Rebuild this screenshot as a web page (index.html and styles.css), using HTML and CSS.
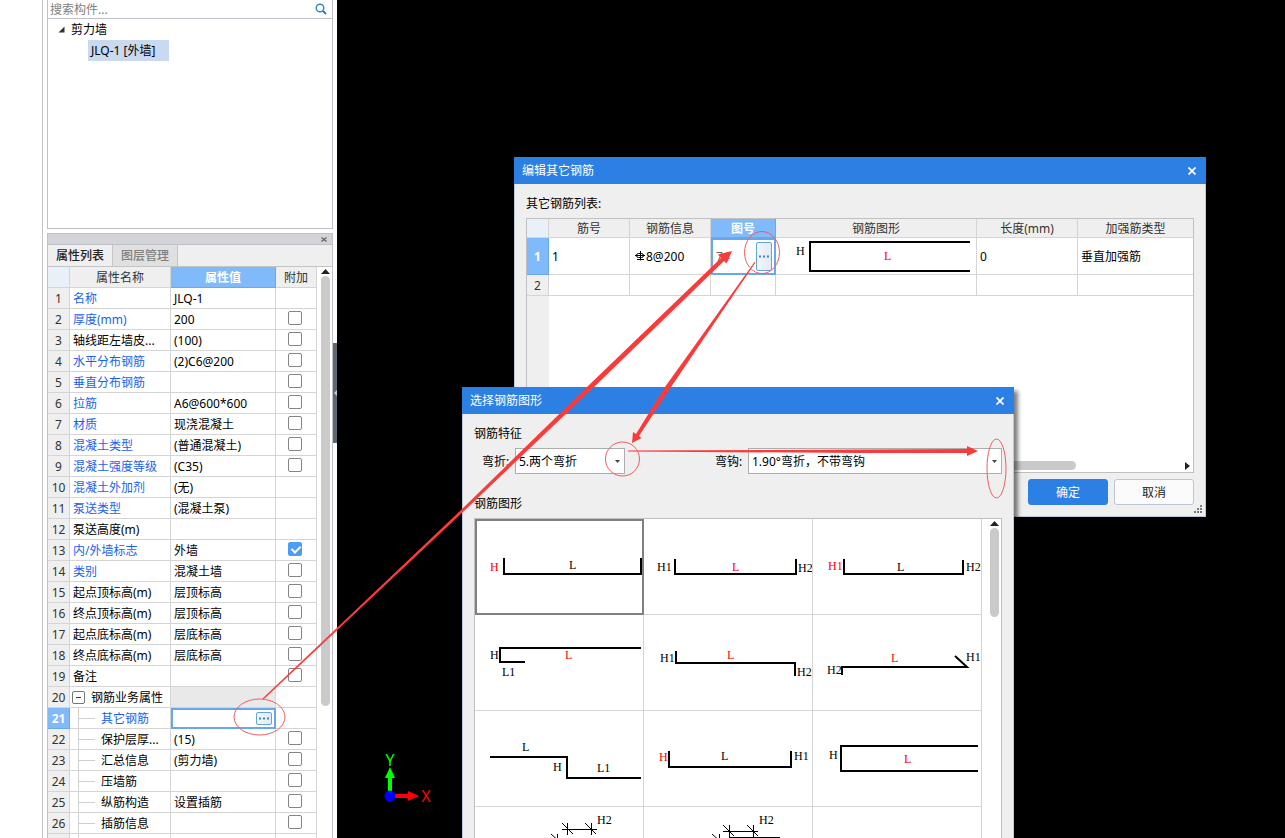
FILE: index.html
```html
<!DOCTYPE html>
<html lang="zh-CN">
<head>
<meta charset="utf-8">
<title>编辑其它钢筋</title>
<link rel="stylesheet" href="styles.css">
</head>
<body>
<div class="app">
  <div class="rail"></div>
  <aside class="side">
    <section class="tree-panel">
      <div class="search">
        <input type="text" placeholder="搜索构件..." aria-label="搜索构件">
        <button class="search-btn" aria-label="搜索"><svg width="12" height="12" viewBox="0 0 12 12"><circle cx="5" cy="5" r="3.8" fill="none" stroke="#2f87c0" stroke-width="1.4"/><path d="M7.8 7.8L11 11" stroke="#2f87c0" stroke-width="2"/></svg></button>
      </div>
      <ul class="tree">
        <li><svg width="7" height="7" viewBox="0 0 7 7"><path d="M6.500 .5V6.500H.5Z" fill="#333"/></svg>剪力墙
          <ul><li><span class="picked">JLQ-1 [外墙]</span></li></ul>
        </li>
      </ul>
    </section>

    <section class="props-panel">
      <div class="dock-bar"><button aria-label="关闭"><svg width="6" height="5" viewBox="0 0 6 5"><path d="M.5 .5L5.500 4.500M5.500 .5L.5 4.500" stroke="#666" stroke-width="1.3"/></svg></button></div>
      <div class="tabs"><button class="tab on">属性列表</button><button class="tab">图层管理</button></div>
      <div class="props-body">
        <table class="grid props">
          <colgroup><col class="c-no"><col class="c-name"><col class="c-val"><col class="c-add"></colgroup>
          <thead><tr><th class="corner"></th><th>属性名称</th><th class="active">属性值</th><th>附加</th></tr></thead>
          <tbody>
            <tr><th>1</th><td class="blue">名称</td><td>JLQ-1</td><td></td></tr>
            <tr><th>2</th><td class="blue">厚度(mm)</td><td>200</td><td><input type="checkbox" aria-label="附加 厚度"></td></tr>
            <tr><th>3</th><td>轴线距左墙皮...</td><td>(100)</td><td><input type="checkbox" aria-label="附加 轴线距左墙皮"></td></tr>
            <tr><th>4</th><td class="blue">水平分布钢筋</td><td>(2)C6@200</td><td><input type="checkbox" aria-label="附加 水平分布钢筋"></td></tr>
            <tr><th>5</th><td class="blue">垂直分布钢筋</td><td></td><td><input type="checkbox" aria-label="附加 垂直分布钢筋"></td></tr>
            <tr><th>6</th><td class="blue">拉筋</td><td>A6@600*600</td><td><input type="checkbox" aria-label="附加 拉筋"></td></tr>
            <tr><th>7</th><td class="blue">材质</td><td>现浇混凝土</td><td><input type="checkbox" aria-label="附加 材质"></td></tr>
            <tr><th>8</th><td class="blue">混凝土类型</td><td>(普通混凝土)</td><td><input type="checkbox" aria-label="附加 混凝土类型"></td></tr>
            <tr><th>9</th><td class="blue">混凝土强度等级</td><td>(C35)</td><td><input type="checkbox" aria-label="附加 混凝土强度等级"></td></tr>
            <tr><th>10</th><td class="blue">混凝土外加剂</td><td>(无)</td><td></td></tr>
            <tr><th>11</th><td class="blue">泵送类型</td><td>(混凝土泵)</td><td></td></tr>
            <tr><th>12</th><td>泵送高度(m)</td><td></td><td></td></tr>
            <tr><th>13</th><td class="blue">内/外墙标志</td><td>外墙</td><td><input type="checkbox" checked aria-label="附加 内/外墙标志"></td></tr>
            <tr><th>14</th><td class="blue">类别</td><td>混凝土墙</td><td><input type="checkbox" aria-label="附加 类别"></td></tr>
            <tr><th>15</th><td>起点顶标高(m)</td><td>层顶标高</td><td><input type="checkbox" aria-label="附加 起点顶标高"></td></tr>
            <tr><th>16</th><td>终点顶标高(m)</td><td>层顶标高</td><td><input type="checkbox" aria-label="附加 终点顶标高"></td></tr>
            <tr><th>17</th><td>起点底标高(m)</td><td>层底标高</td><td><input type="checkbox" aria-label="附加 起点底标高"></td></tr>
            <tr><th>18</th><td>终点底标高(m)</td><td>层底标高</td><td><input type="checkbox" aria-label="附加 终点底标高"></td></tr>
            <tr><th>19</th><td>备注</td><td></td><td><input type="checkbox" aria-label="附加 备注"></td></tr>
            <tr><th>20</th><td class="node"><div class="group"><button class="toggle" aria-label="折叠"><svg width="11" height="11" viewBox="0 0 11 11"><path d="M3 5.500H8" stroke="#333"/></svg></button><span>钢筋业务属性</span></div></td><td class="muted"></td><td></td></tr>
            <tr class="current"><th>21</th><td class="node blue"><div class="child"><span>其它钢筋</span></div></td><td class="editing"><div class="editor"><input type="text" aria-label="其它钢筋"><button class="more" aria-label="更多"><svg width="12" height="3" viewBox="0 0 12 3"><path d="M1 1.500h2M5 1.500h2M9 1.500h2" stroke="#3d87cc" stroke-width="2"/></svg></button></div></td><td></td></tr>
            <tr><th>22</th><td class="node"><div class="child"><span>保护层厚...</span></div></td><td>(15)</td><td><input type="checkbox" aria-label="附加 保护层厚度"></td></tr>
            <tr><th>23</th><td class="node"><div class="child"><span>汇总信息</span></div></td><td>(剪力墙)</td><td><input type="checkbox" aria-label="附加 汇总信息"></td></tr>
            <tr><th>24</th><td class="node"><div class="child"><span>压墙筋</span></div></td><td></td><td><input type="checkbox" aria-label="附加 压墙筋"></td></tr>
            <tr><th>25</th><td class="node"><div class="child"><span>纵筋构造</span></div></td><td>设置插筋</td><td><input type="checkbox" aria-label="附加 纵筋构造"></td></tr>
            <tr><th>26</th><td class="node"><div class="child"><span>插筋信息</span></div></td><td></td><td><input type="checkbox" aria-label="附加 插筋信息"></td></tr>
            <tr><th></th><td class="node"><div class="child"></div></td><td></td><td></td></tr>
          </tbody>
        </table>
        <div class="vscroll"><svg width="9" height="5" viewBox="0 0 9 5"><path d="M0 5L4.500 0L9 5Z" fill="#222"/></svg><span class="thumb tall"></span></div>
      </div>
    </section>
  </aside>
  <div class="splitter"><button aria-label="收起"><svg width="4" height="8" viewBox="0 0 4 8"><path d="M4 1V7L1 4Z" fill="#c6ccd3"/></svg></button></div>

  <main class="canvas">
    <svg class="axis" width="60" height="66" viewBox="0 0 60 66">
      <path d="M18 53V30" stroke="#0f0" stroke-width="4"/><path d="M18 23L23 34H13Z" fill="#0f0"/>
      <path d="M18 52H38" stroke="#f00" stroke-width="4"/><path d="M47 52L36 47V57Z" fill="#f00"/>
      <circle cx="18" cy="52" r="5.500" fill="#00f"/>
      <text x="18" y="22" fill="#0f0">Y</text><text x="54" y="58" fill="#f00">X</text>
    </svg>
  </main>
</div>

<section class="dialog edit-dialog">
  <header><h2>编辑其它钢筋</h2><button aria-label="关闭"><svg width="8" height="8" viewBox="0 0 8 8"><path d="M.5 .5L7.500 7.500M7.500 .5L.5 7.500" stroke="#fff" stroke-width="1.700"/></svg></button></header>
  <div class="dialog-body">
    <p class="caption">其它钢筋列表:</p>
    <div class="list-frame">
      <table class="grid bars">
        <colgroup><col class="c-no"><col class="b-no"><col class="b-no"><col class="b-fig"><col class="b-draw"><col class="b-len"><col></colgroup>
        <thead><tr><th class="corner"></th><th>筋号</th><th>钢筋信息</th><th class="active">图号</th><th>钢筋图形</th><th>长度(mm)</th><th>加强筋类型</th></tr></thead>
        <tbody>
          <tr class="current big"><th>1</th><td>1</td><td><div class="info"><svg width="10" height="13" viewBox="0 0 10 13" fill="none" stroke="#000"><rect x="1.500" y="2.500" width="7" height="4" rx="2"/><path d="M5.500 0V9.500M0 4.500H10M2 8.500H9"/></svg>8@200</div></td><td class="editing"><div class="editor"><input type="text" value="74" aria-label="图号"><button class="more" aria-label="选择图形"><svg width="12" height="3" viewBox="0 0 12 3"><path d="M1 1.500h2M5 1.500h2M9 1.500h2" stroke="#3d87cc" stroke-width="2"/></svg></button></div></td>
            <td class="draw"><svg width="200" height="36" viewBox="0 0 200 36"><path d="M194 4H34V33H194"/><text x="20" y="17">H</text><text x="108" y="22" class="r">L</text></svg></td><td>0</td><td>垂直加强筋</td></tr>
          <tr><th>2</th><td></td><td></td><td></td><td></td><td></td><td></td></tr>
        </tbody>
      </table>
      <div class="blank"></div>
      <div class="hscroll"><span class="hthumb"></span><svg width="5" height="8" viewBox="0 0 5 8"><path d="M0 0L5 4L0 8Z" fill="#222"/></svg></div>
    </div>
    <footer><button class="primary">确定</button><button>取消</button></footer>
    <svg class="grip" width="8" height="8" viewBox="0 0 8 8" fill="#777c85"><path d="M6 0h2v2H6zM3 3h2v2H3zM6 3h2v2H6zM0 6h2v2H0zM3 6h2v2H3zM6 6h2v2H6z"/></svg>
  </div>
</section>

<section class="dialog shape-dialog">
  <header><h2>选择钢筋图形</h2><button aria-label="关闭"><svg width="8" height="8" viewBox="0 0 8 8"><path d="M.5 .5L7.500 7.500M7.500 .5L.5 7.500" stroke="#fff" stroke-width="1.700"/></svg></button></header>
  <div class="dialog-body">
    <p class="caption">钢筋特征</p>
    <div class="filters">
      <label for="bend">弯折:</label>
      <div class="combo bend"><select id="bend"><option>5.两个弯折</option></select><svg width="5" height="3" viewBox="0 0 5 3"><path d="M0 0H5L2.500 3Z" fill="#444"/></svg></div>
      <label for="hook">弯钩:</label>
      <div class="combo"><select id="hook"><option>1.90°弯折，不带弯钩</option></select><svg width="5" height="3" viewBox="0 0 5 3"><path d="M0 0H5L2.500 3Z" fill="#444"/></svg></div>
    </div>
    <p class="caption">钢筋图形</p>
    <div class="shape-frame">
      <div class="shapes">
        <button class="shape on"><svg viewBox="0 0 168 95"><path d="M29 39V55H166V39"/><text x="15" y="52" class="r">H</text><text x="94" y="50">L</text></svg></button>
        <button class="shape"><svg viewBox="0 0 168 95"><path d="M31 40V55H152V40"/><text x="13" y="52">H1</text><text x="88" y="52" class="r">L</text><text x="154" y="53">H2</text></svg></button>
        <button class="shape"><svg viewBox="0 0 168 95"><path d="M31 40V55H150V41"/><text x="15" y="51" class="r">H1</text><text x="84" y="52">L</text><text x="153" y="52">H2</text></svg></button>
        <button class="shape"><svg viewBox="0 0 168 95"><path d="M166 33H25V47H50"/><text x="15" y="44">H</text><text x="90" y="44" class="r">L</text><text x="27" y="61">L1</text></svg></button>
        <button class="shape"><svg viewBox="0 0 168 95"><path d="M32 36V48H151V61"/><text x="16" y="47">H1</text><text x="83" y="44" class="r">L</text><text x="153" y="61">H2</text></svg></button>
        <button class="shape"><svg viewBox="0 0 168 95"><path d="M29 60V52H154L142 41"/><text x="14" y="59">H2</text><text x="78" y="47" class="r">L</text><text x="153" y="46">H1</text></svg></button>
        <button class="shape"><svg viewBox="0 0 168 95"><path d="M15 46H92V67H166"/><text x="47" y="40">L</text><text x="78" y="60">H</text><text x="122" y="61">L1</text></svg></button>
        <button class="shape"><svg viewBox="0 0 168 95"><path d="M25 40V56H147V40"/><text x="15" y="50" class="r">H</text><text x="77" y="49">L</text><text x="150" y="49">H1</text></svg></button>
        <button class="shape"><svg viewBox="0 0 168 95"><path d="M165 35H28V60H165"/><text x="16" y="48">H</text><text x="91" y="52" class="r">L</text></svg></button>
        <button class="shape"><svg viewBox="0 0 168 95"><path class="thin" d="M87 22.500H122M92.500 16V28M87 16L98 27M116.500 16V28M110 16L121 27M82.500 27V36M76 27L86 36"/><text x="122" y="17">H2</text></svg></button>
        <button class="shape"><svg viewBox="0 0 168 95"><path class="thin" d="M79 24.500H114M85.500 18V30M79 18L90 29M109.500 18V30M103 18L114 29M75.500 27V36M68 27L78 36M85 30.500H136"/><text x="115" y="17">H2</text></svg></button>
        <button class="shape" aria-label="空"></button>
      </div>
      <div class="vscroll"><svg width="9" height="5" viewBox="0 0 9 5"><path d="M0 5L4.500 0L9 5Z" fill="#222"/></svg><span class="thumb short"></span></div>
    </div>
  </div>
</section>

<svg class="marks" width="1285" height="838" viewBox="0 0 1285 838">
  <g fill="#fb3a3a">
    <path d="M262.500 698.500L461 510L588 386L721 258L718 254.500L732 251L726.500 263.500L724 261L592 389L463 512L263.500 699.500Z"/>
    <path d="M754.500 262L665 387L636 434L633 432L632 443L641.500 438L639 436L669 390L755.500 262.500Z"/>
    <path d="M628 450.500L860 449.500L967 449V446L978 451L967 456V453L860 453L628 451.500Z"/>
  </g>
  <g fill="none" stroke="#f25c5c">
    <ellipse cx="259.500" cy="717" rx="25.500" ry="18"/>
    <ellipse cx="762" cy="252.500" rx="17.500" ry="21"/>
    <circle cx="622.500" cy="459" r="17"/>
    <ellipse cx="996.500" cy="468.500" rx="9.500" ry="29.500"/>
  </g>
</svg>
</body>
</html>
```

FILE: styles.css
```css
* { box-sizing: border-box; }
body {
  margin: 0;
  height: 100vh;
  overflow: hidden;
  position: relative;
  background: #fff;
  color: #000;
  font: 12px/16px "Noto Sans", "Noto Sans CJK SC", sans-serif;
}
button, input, select { font: inherit; color: inherit; }
button { border: 0; padding: 0; background: none; }
svg { display: block; flex: none; }
p, h2, ul { margin: 0; padding: 0; list-style: none; font-size: 12px; font-weight: 400; }

.app { display: flex; height: 100vh; overflow: hidden; }
.rail { flex: none; width: 43px; border-right: 1px solid #c4c4cc; }
.side { flex: none; width: 290px; padding-left: 4px; display: flex; flex-direction: column; gap: 4px; }
.canvas { flex: 1; position: relative; background: #000; }

/* component tree */
.tree-panel { flex: none; height: 229px; border: 1px solid #c0c0c8; border-top: 0; }
.search { display: flex; align-items: center; height: 19px; padding: 0 5px 0 2px; border-bottom: 1px solid #c0c0c8; }
.search input { flex: 1; min-width: 0; height: 18px; border: 0; padding: 1px 0 0; outline: 0; background: none; }
.search input::placeholder { color: #808080; }
.tree { padding-top: 1px; line-height: 20px; }
.tree > li { padding-left: 23px; position: relative; }
.tree > li > svg { position: absolute; left: 10px; top: 6px; }
.tree ul { padding-left: 17px; }
.picked { display: inline-block; width: 81px; height: 21px; padding-left: 3px; background: #c8d9f0; line-height: 21px; }

/* property list */
.props-panel { flex: 1; min-height: 0; display: flex; flex-direction: column; border: 1px solid #c0c0c8; border-bottom: 0; overflow: hidden; }
.dock-bar { flex: none; display: flex; align-items: center; justify-content: flex-end; height: 11px; padding-right: 5px; background: #d3d4da; border-bottom: 1px solid #bfc0c6; }
.tabs { flex: none; display: flex; height: 22px; background: #efefef; border-bottom: 1px solid #c4c4c4; }
.tab { width: 65px; background: #e0e0e0; border-right: 1px solid #c4c4c4; color: #808080; font-weight: 500; }
.tab.on { background: #efefef; color: #222; }
.props-body { flex: none; display: flex; }

.grid { table-layout: fixed; border-collapse: separate; border-spacing: 0; background: #fff; }
.grid th, .grid td { height: 21px; padding: 2px 3px 0; border-right: 1px solid #d5d5d5; border-bottom: 1px solid #d5d5d5; overflow: hidden; white-space: nowrap; text-align: left; line-height: 18px; }
.grid th { padding: 2px 0 0; background: #efefef; color: #333; font-weight: 400; text-align: center; }
.grid .corner { background: #eaf0f7; }
.grid th.active, .grid .current th { background: #80bafa; border-color: #6aa8ea; color: #fff; font-weight: 700; }
.grid td.blue { color: #1b5ff2; }
.grid td.muted { background: #e9e9e9; }
.grid td.node { padding: 0 3px; }
.props { width: 269px; }
.c-no { width: 22px; }
.c-name { width: 101px; }
.c-val { width: 105px; }
.c-add { width: 41px; }
.grid.props td:last-child { padding: 0 4px 0 2px; }

input[type="checkbox"] { appearance: none; display: block; width: 14px; height: 14px; margin: 0 auto 2px; border: 1px solid #858585; border-radius: 2px; background: #fff; }
input[type="checkbox"]:checked { position: relative; border-color: #4d9cf8; background: #4d9cf8; }
input[type="checkbox"]:checked::after { content: ""; position: absolute; left: 4px; top: 1px; width: 4px; height: 7px; border: solid #fff; border-width: 0 2px 2px 0; transform: rotate(45deg); }

.group { display: flex; align-items: center; gap: 6px; margin-left: -1px; }
.toggle { width: 13px; height: 13px; border: 1px solid #777; border-radius: 2px; }
.child { display: flex; align-items: center; height: 20px; margin-left: 5px; border-left: 1px solid #d0d0d0; }
.child::before { content: ""; width: 16px; margin-right: 6px; border-top: 1px solid #d0d0d0; }
.node span { padding-top: 2px; }

.grid td.editing { padding: 0; border: 0; }
.editor { display: flex; align-items: center; height: 21px; padding-right: 2px; border: 2px solid #68a8ea; background: #fff; }
.editor input { flex: 1; min-width: 0; height: 16px; padding: 0 0 0 3px; border: 0; outline: 0; }
.more { display: flex; align-items: center; justify-content: center; width: 16px; height: 13px; border: 1px solid #64a4dc; border-radius: 2px; background: linear-gradient(to right, #f4f7fb, #e2eaf3); }

.vscroll { flex: 1; display: flex; flex-direction: column; align-items: center; gap: 2px; padding: 2px 0 0 1px; background: #fff; }
.thumb { width: 9px; border-radius: 5px; background: #cacaca; }
.tall { height: 430px; }
.short { height: 89px; }

.splitter { flex: none; display: flex; width: 4px; padding-top: 343px; }
.splitter button { display: flex; align-items: center; width: 4px; height: 100px; background: #5e6774; }

.axis { position: absolute; left: 35px; top: 744px; }
.axis text { font: 16px "Noto Sans", sans-serif; text-anchor: middle; }

/* dialogs */
.dialog { position: absolute; display: flex; flex-direction: column; }
.edit-dialog { left: 514px; top: 157px; width: 692px; height: 360px; }
.shape-dialog { left: 462px; top: 387px; width: 552px; bottom: -70px; box-shadow: 4px 4px 4px rgba(0, 0, 0, .5); }
.dialog > header { flex: none; display: flex; align-items: center; justify-content: space-between; height: 27px; padding: 0 10px 0 8px; background: #2d80e3; color: #fff; }
.dialog-body { flex: 1; min-height: 0; display: flex; flex-direction: column; position: relative; padding: 12px 11px 0; border: 1px solid #bccadb; border-top: 0; background: #efefef; }
.caption { flex: none; height: 16px; margin-bottom: 6px; }

.list-frame { flex: none; height: 255px; display: flex; flex-direction: column; border: 1px solid #c0c0c0; background: #fff; }
.bars { width: 100%; }
.grid.bars thead th { height: 19px; line-height: 16px; }
.bars th:last-child, .bars td:last-child { border-right: 0; }
.bars .big th, .bars .big td { height: 37px; }
.b-no { width: 81px; }
.b-fig { width: 65px; }
.b-draw { width: 201px; }
.b-len { width: 101px; }
.bars .editor { height: 37px; }
.bars .more { height: 29px; }
.bars .editor input { color: #666; }
.info { display: flex; align-items: center; gap: 1px; padding-left: 2px; }
.grid td.draw { padding: 0; }
.blank { flex: 1; background: linear-gradient(to right, #efefef 22px, #fff 22px); }
.hscroll { flex: none; display: flex; align-items: center; justify-content: space-between; height: 13px; padding: 0 3px 0 24px; }
.hthumb { width: 525px; height: 9px; border-radius: 5px; background: #cacaca; }
.dialog footer { display: flex; justify-content: flex-end; gap: 6px; margin-top: 6px; }
.dialog footer button { width: 80px; height: 26px; padding-top: 1px; border: 1px solid #b9c5d8; border-radius: 3px; background: #fbfbfb; color: #222; }
.dialog footer .primary { border-color: #2d80e3; background: #2d80e3; color: #fff; }
.grip { position: absolute; right: 3px; bottom: 3px; }

.filters { flex: none; display: grid; grid-template-columns: 33px 200px 33px 1fr; align-items: center; padding-left: 8px; margin-bottom: 22px; }
.filters label { padding-top: 2px; }
.combo { position: relative; height: 26px; }
.combo.bend { width: 110px; }
.combo select { appearance: none; width: 100%; height: 26px; padding: 2px 20px 0 3px; border: 1px solid #adadad; border-radius: 0; background: #fff; }
.combo svg { position: absolute; right: 5px; top: 12px; }

.shape-frame { flex: 1; min-height: 0; display: flex; border: 1px solid #c0c0c0; background: #fff; overflow: hidden; }
.shapes { flex: none; display: grid; grid-template-columns: repeat(3, 169px); grid-auto-rows: 96px; }
.shape-frame .vscroll { padding-left: 6px; }
.shape { border: solid #d5d5d5; border-width: 0 1px 1px 0; overflow: hidden; }
.shape.on { outline: 2px solid #808080; outline-offset: -2px; border-color: #808080; }
.shape svg { width: 168px; height: 95px; }
.shape svg, .draw svg { fill: none; stroke: #000; stroke-width: 2; }
.shape text, .draw text { font: 12px "Liberation Serif", serif; fill: #000; stroke: none; }
.shape .r, .draw .r { fill: #f00; }
.shape .thin { stroke-width: 1; }

.marks { position: absolute; left: 0; top: 0; pointer-events: none; }
```
